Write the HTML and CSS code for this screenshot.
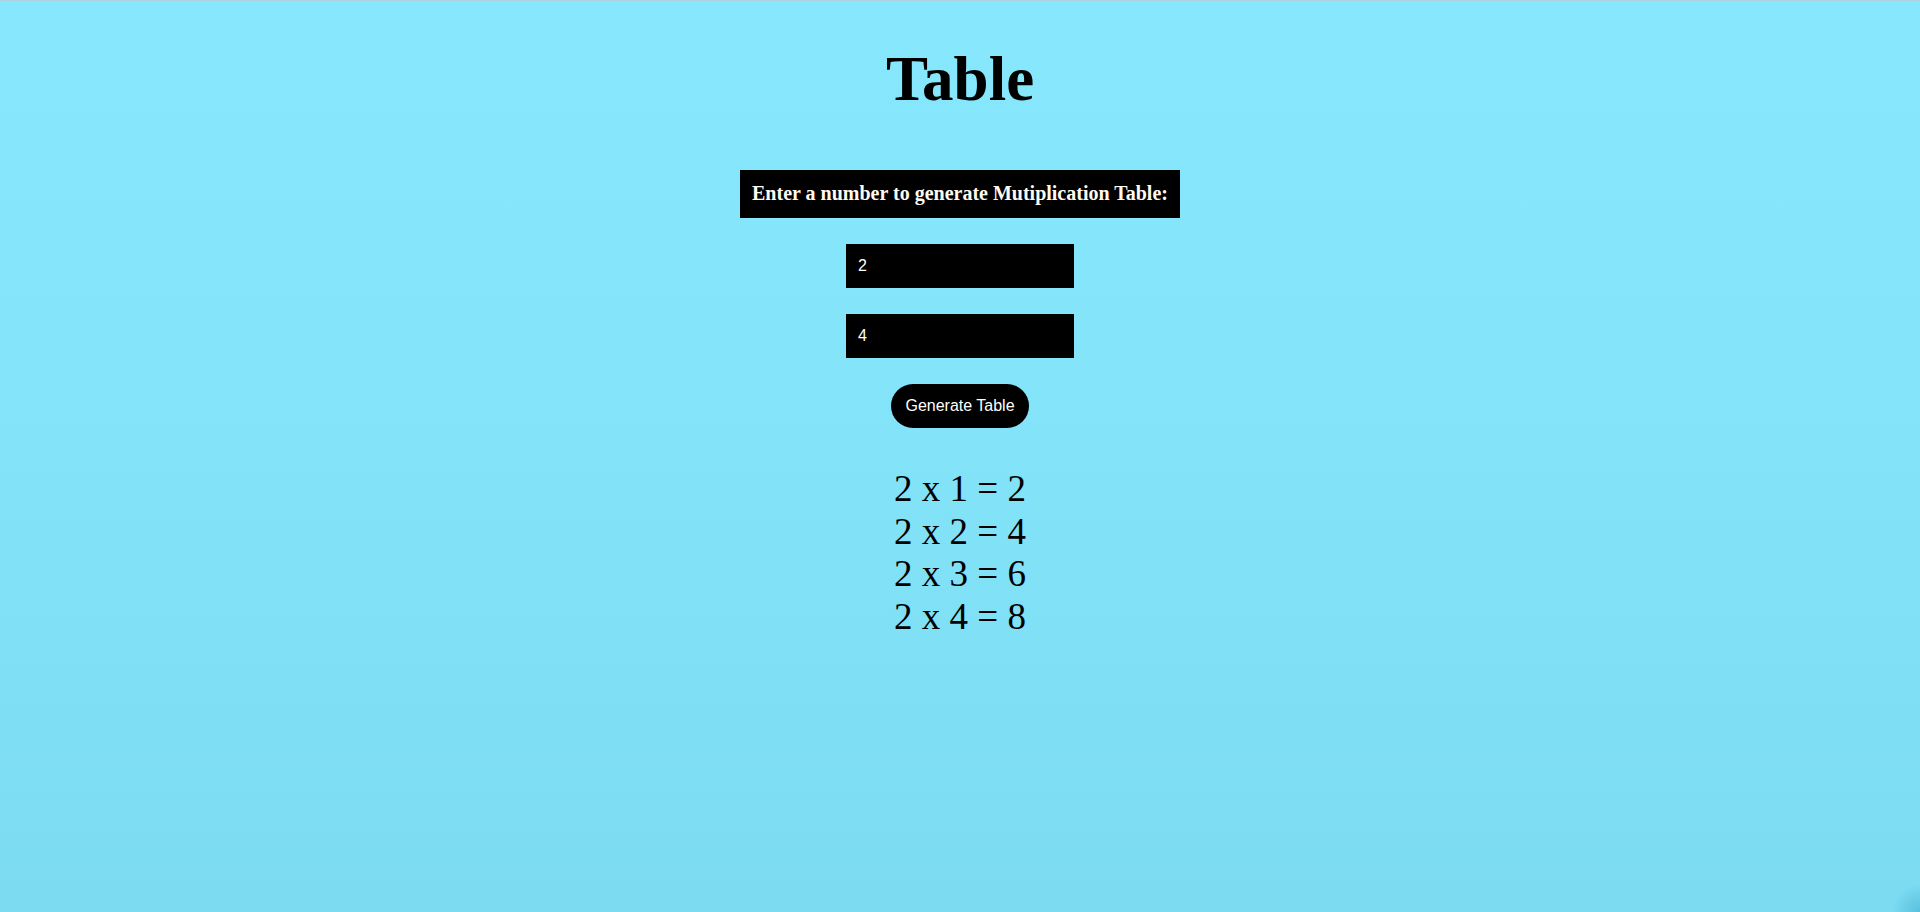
FILE: index.html
```html
<!DOCTYPE html>
<html lang="en">
<head>
<meta charset="utf-8">
<title>Table</title>
<link rel="stylesheet" href="styles.css">
</head>
<body>
<main class="page">
  <h1 class="title">Table</h1>
  <label class="prompt" for="num">Enter a number to generate Mutiplication Table:</label>
  <input class="field field-first" id="num" type="text" value="2">
  <input class="field" id="count" type="text" value="4">
  <button class="generate" type="button">Generate Table</button>
  <div class="results">
    <div class="row">2 x 1 = 2</div>
    <div class="row">2 x 2 = 4</div>
    <div class="row">2 x 3 = 6</div>
    <div class="row">2 x 4 = 8</div>
  </div>
</main>
</body>
</html>
```
FILE: styles.css
```css
html, body {
  margin: 0;
  padding: 0;
  height: 100%;
}

body {
  font-family: "Liberation Serif", "Times New Roman", serif;
  color: #000;
  background:
    radial-gradient(circle at 100% 100%, rgba(60, 170, 205, 0.55) 0, rgba(60, 170, 205, 0) 28px),
    linear-gradient(180deg, #87e7fc 0%, #84e4fa 40%, #7fdff5 75%, #7cdbf1 100%);
  border-top: 1px solid #a9d3de;
  box-sizing: border-box;
  overflow: hidden;
}

.page {
  display: flex;
  flex-direction: column;
  align-items: center;
}

.title {
  margin: 41px 0 0;
  font-size: 63px;
  line-height: 74px;
  font-weight: bold;
}

.prompt {
  margin-top: 54px;
  background: #000;
  color: #fffaf0;
  font-weight: bold;
  font-size: 20px;
  line-height: 23px;
  padding: 12px 12px 13px;
}

.field {
  box-sizing: border-box;
  width: 228px;
  height: 44px;
  margin-top: 26px;
  padding: 0 12px;
  border: none;
  background: #000;
  color: #fff;
  font-family: "Liberation Sans", Arial, sans-serif;
  font-size: 16px;
  outline: none;
}

.generate {
  margin-top: 26px;
  height: 44px;
  padding: 0 14px;
  border: none;
  border-radius: 22px;
  background: #000;
  color: #fff;
  font-family: "Liberation Sans", Arial, sans-serif;
  font-size: 16px;
}

.results {
  margin-top: 40px;
  font-size: 37px;
  line-height: 42.6px;
  text-align: center;
}
```
